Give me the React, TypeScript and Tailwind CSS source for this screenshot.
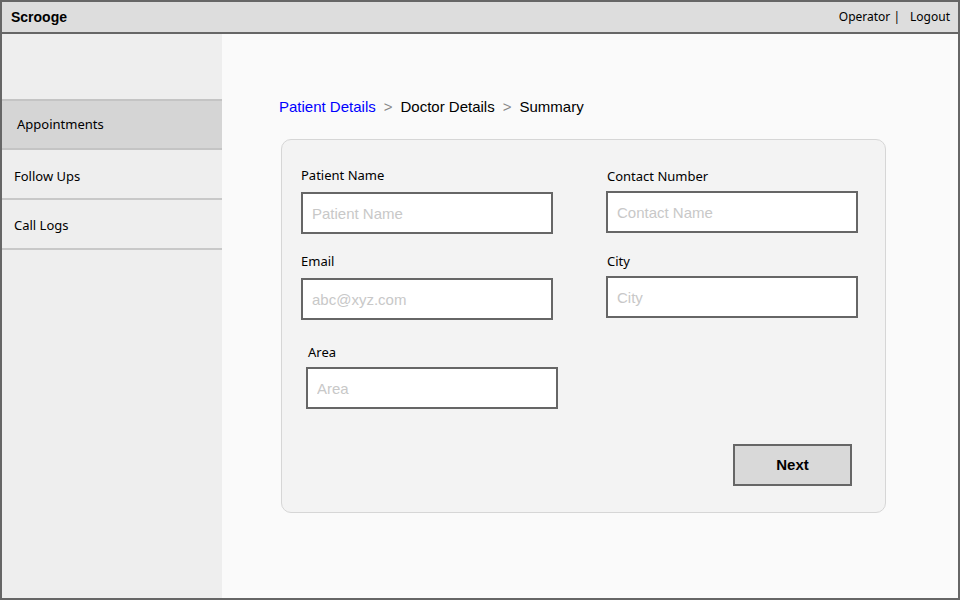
import React from "react";

const hand = { fontFamily: '"Comic Sans MS", "Noto Sans", sans-serif' };
const arial = { fontFamily: '"Liberation Sans", Arial, sans-serif' };

function Field({
  label,
  placeholder,
  labelClass = "",
  inputClass = "",
}: {
  label: string;
  placeholder: string;
  labelClass?: string;
  inputClass?: string;
}) {
  return (
    <div className="flex flex-col">
      <div className={"h-[18px] text-[13px] leading-[18px] text-black " + labelClass} style={hand}>
        {label}
      </div>
      <input
        placeholder={placeholder}
        className={
          "h-[42px] w-[252px] border-2 border-[#666666] bg-white px-[9px] text-[15px] text-black outline-none placeholder:text-[#c8c8c8] " +
          inputClass
        }
        style={arial}
      />
    </div>
  );
}

export default function App() {
  return (
    <div className="flex h-[600px] w-[960px] flex-col border-2 border-[#666666] bg-[#fafafa]" style={arial}>
      <header className="flex h-[32px] shrink-0 items-center justify-between border-b-2 border-[#666666] bg-[#dddddd] pl-[9px] pr-[8px]">
        <div className="text-[14px] font-bold text-black">Scrooge</div>
        <div className="flex items-center text-[12px] text-black" style={hand}>
          <span>Operator |</span>
          <span className="ml-[10px]">Logout</span>
        </div>
      </header>
      <div className="flex min-h-0 flex-1">
        <aside className="w-[220px] shrink-0 bg-[#eeeeee] pt-[65px]" style={hand}>
          <div className="flex h-[51px] items-center border-y-2 border-[#c4c4c4] bg-[#d5d5d5] pl-[15px] text-[13px] text-black">
            Appointments
          </div>
          <div className="flex h-[50px] items-center border-b-2 border-[#c8c8c8] pl-[12px] pt-[5px] text-[13px] text-black">
            Follow Ups
          </div>
          <div className="flex h-[50px] items-center border-b-2 border-[#c8c8c8] pl-[12px] pt-[3px] text-[13px] text-black">
            Call Logs
          </div>
        </aside>
        <main className="flex-1 pl-[57px] pt-[63px]">
          <div className="flex h-[20px] items-center text-[15px]">
            <span className="text-[#0000ff]">Patient Details</span>
            <span className="mx-[8px] text-[#888888]">&gt;</span>
            <span className="text-black">Doctor Details</span>
            <span className="mx-[8px] text-[#888888]">&gt;</span>
            <span className="text-black">Summary</span>
          </div>
          <div className="ml-[2px] mt-[22px] h-[374px] w-[605px] rounded-[10px] border border-[#d6d6d6] bg-[#f3f3f3] px-[19px] pt-[26px]">
            <div className="flex gap-x-[48px]">
              <div className="flex flex-col">
                <Field label="Patient Name" placeholder="Patient Name" inputClass="mt-[8px]" />
                <div className="mt-[18px]">
                  <Field label="Email" placeholder="abc@xyz.com" inputClass="mt-[8px]" />
                </div>
                <div className="ml-[5px] mt-[23px]">
                  <Field label="Area" placeholder="Area" labelClass="ml-[2px]" inputClass="mt-[6px]" />
                </div>
              </div>
              <div className="flex flex-col pt-[1px]">
                <Field label="Contact Number" placeholder="Contact Name" labelClass="ml-[1px]" inputClass="mt-[6px]" />
                <div className="mt-[19px]">
                  <Field label="City" placeholder="City" labelClass="ml-[1px]" inputClass="mt-[6px]" />
                </div>
              </div>
            </div>
            <div className="mt-[35px] flex justify-end pr-[14px]">
              <button className="h-[42px] w-[119px] border-2 border-[#666666] bg-[#d9d9d9] text-[15px] font-bold text-black">
                Next
              </button>
            </div>
          </div>
        </main>
      </div>
    </div>
  );
}
